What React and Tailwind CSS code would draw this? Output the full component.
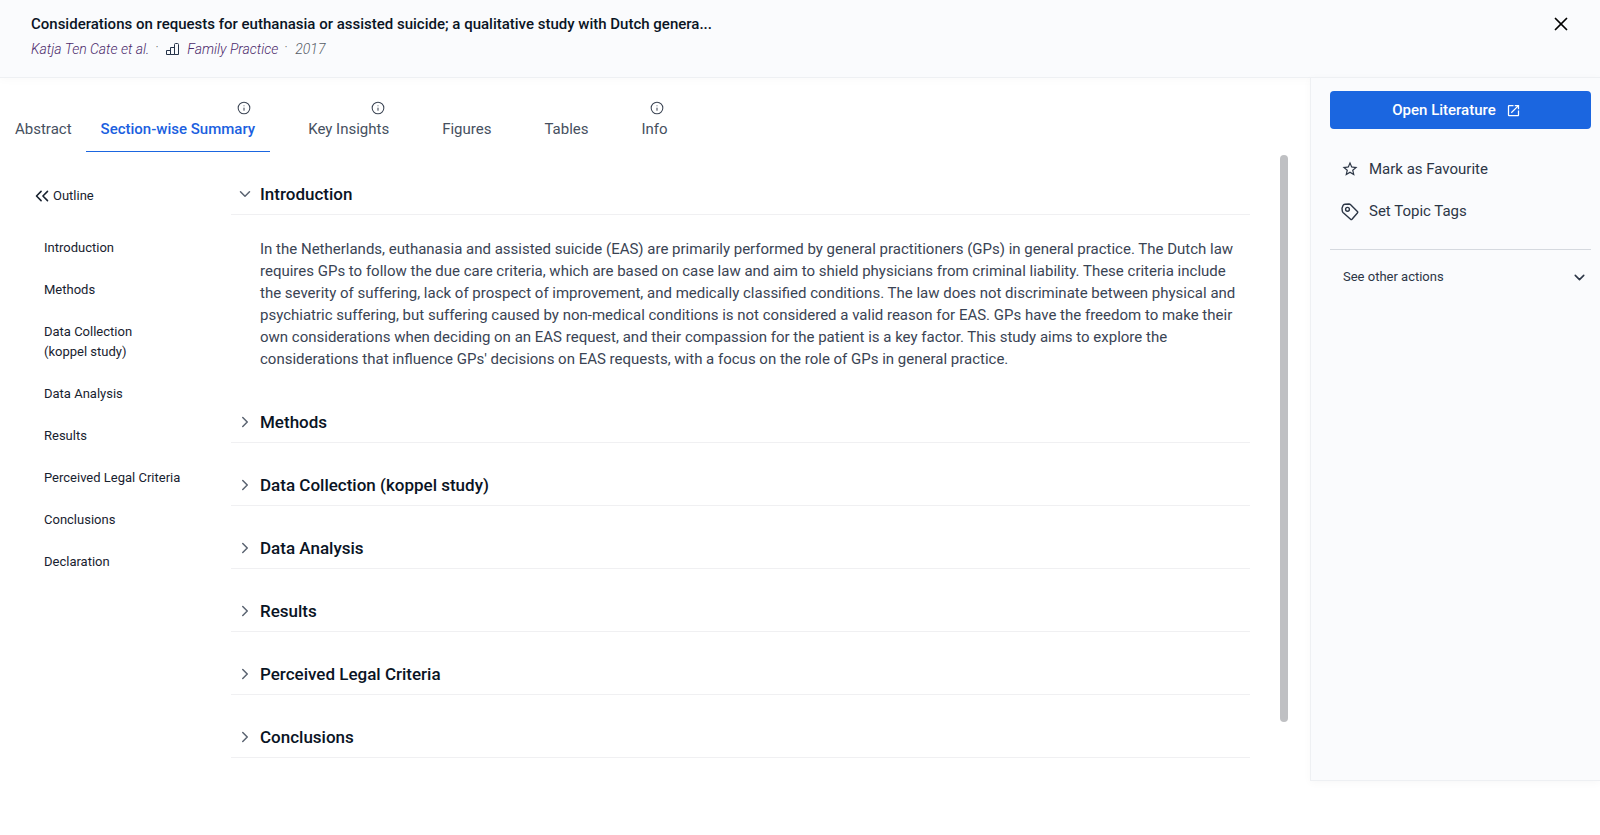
import { useState } from "react";
import { ChevronDown, ChevronRight, ChevronsLeft, Info, X } from "lucide-react";
import { MdOpenInNew, MdStarBorder } from "react-icons/md";

const tabs = [
  { id: "abstract", label: "Abstract" },
  { id: "summary", label: "Section-wise Summary", info: true },
  { id: "insights", label: "Key Insights", info: true },
  { id: "figures", label: "Figures" },
  { id: "tables", label: "Tables" },
  { id: "info", label: "Info", info: true },
];

const outline = [
  "Introduction",
  "Methods",
  "Data Collection (koppel\u00a0study)",
  "Data Analysis",
  "Results",
  "Perceived Legal Criteria",
  "Conclusions",
  "Declaration",
];

const sections = outline.slice(0, 7);

const introduction =
  "In the Netherlands, euthanasia and assisted suicide (EAS) are primarily performed by general practitioners (GPs) in general practice. The Dutch law requires GPs to follow the due care criteria, which are based on case law and aim to shield physicians from criminal liability. These criteria include the severity of suffering, lack of prospect of improvement, and medically classified conditions. The law does not discriminate between physical and psychiatric suffering, but suffering caused by non-medical conditions is not considered a valid reason for EAS. GPs have the freedom to make their own considerations when deciding on an EAS request, and their compassion for the patient is a key factor. This study aims to explore the considerations that influence GPs' decisions on EAS requests, with a focus on the role of GPs in general practice.";

const JournalIcon = () => (
  <svg className="h-3 w-[13px]" viewBox="0 0 13 12" fill="none" stroke="#26344a" strokeWidth="1">
    <path d="M.5 7.5h4v4h-4zM4.5 4.5h4v7h-4zM8.5 1.5q0-1 1-1h2q1 0 1 1v10h-4z" />
  </svg>
);

const TagIcon = () => (
  <svg
    className="h-[18px] w-[18px]"
    viewBox="0 0 18 18"
    fill="none"
    stroke="currentColor"
    strokeWidth="1.4"
    strokeLinejoin="round"
  >
    <path d="M1 5.2 2 2.6Q2.500 1.300 4 1.200L8 1Q8.800 1 9.400 1.600L16.400 8.600Q17.100 9.300 16.400 10L11 16.300Q10.300 17 9.600 16.300L2 9.400Q1.400 8.800 1.300 8Z" />
    <circle cx="6.500" cy="6.300" r="1.900" />
  </svg>
);

const Header = () => (
  <header className="relative flex h-[78px] items-start justify-between border-b border-[#eef0f3] bg-[#fafbfd] pl-[31px] pr-7 pt-[13px] shadow-[0_3px_8px_rgba(0,0,0,0.02)]">
    <div>
      <h1 className="text-[15px] font-medium leading-[22px] text-[#0a1424]">
        Considerations on requests for euthanasia or assisted suicide; a qualitative study with Dutch genera...
      </h1>
      <div className="mt-0.5 flex items-center text-[14px] font-light italic leading-5">
        <a href="#author" className="text-[#4b2a6b]">
          Katja Ten Cate et al.
        </a>
        <span className="w-[17px] pb-1 pl-[6px] text-[#555]">·</span>
        <JournalIcon />
        <a href="#journal" className="ml-2 text-[#4b2a6b]">
          Family Practice
        </a>
        <span className="w-[17px] pb-1 pl-[6px] text-[#555]">·</span>
        <span className="text-[#555b66]">2017</span>
      </div>
    </div>
    <button type="button" aria-label="Close" className="text-black">
      <X size={22} strokeWidth={1.9} />
    </button>
  </header>
);

const Tabs = ({ active, onChange }) => (
  <nav className="flex gap-[23px] pt-[22px]">
    {tabs.map((tab) => (
      <button
        key={tab.id}
        type="button"
        onClick={() => onChange(tab.id)}
        className={`flex h-[52px] flex-col items-end border-b px-[15px] text-[15px] leading-5 first:-mr-6 ${
          tab.id === active
            ? "border-[#1b66e0] font-medium text-[#1b5fe0]"
            : "border-transparent text-[#465060]"
        }`}
      >
        <span className="mb-1 mr-1 flex h-[15px] items-center">
          {tab.info && <Info size={14} strokeWidth={1.8} className="text-[#3d4655]" />}
        </span>
        {tab.label}
      </button>
    ))}
  </nav>
);

const Outline = () => (
  <aside className="w-[231px] shrink-0 pl-[31px] pt-[34px] text-[#18222f]">
    <button type="button" className="flex h-5 items-center text-[13px] leading-5">
      <ChevronsLeft size={22} strokeWidth={1.7} />
      Outline
    </button>
    <ul className="mt-8 flex w-[160px] flex-col gap-[22px] pl-[13px] text-[13px] leading-5">
      {outline.map((item) => (
        <li key={item}>
          <a href="#section" className="block">
            {item}
          </a>
        </li>
      ))}
    </ul>
  </aside>
);

const Section = ({ title, open, onToggle }) => (
  <section>
    <h2 className="border-b border-[#f0f0f2] pb-[9px]">
      <button
        type="button"
        onClick={onToggle}
        className="flex items-center gap-[6px] pl-[5px] text-[17px] font-medium leading-[22px] text-[#0a1424]"
      >
        {open ? (
          <ChevronDown size={18} strokeWidth={2} className="text-[#5a6371]" />
        ) : (
          <ChevronRight size={18} strokeWidth={2} className="text-[#5a6371]" />
        )}
        {title}
      </button>
    </h2>
    {open && (
      <p className="pb-[10px] pl-[29px] pr-3 pt-[23px] text-[15px] leading-[22px] text-[#3a4454]">{introduction}</p>
    )}
  </section>
);

const Actions = () => (
  <aside className="relative -mt-px flex h-[704px] w-[290px] shrink-0 flex-col border border-r-0 border-[#eef0f3] bg-[#fafbfd] pl-[19px] pr-[9px] pt-[13px] text-[#2c3646] shadow-[0_2px_8px_rgba(0,0,0,0.03)]">
    <button
      type="button"
      className="flex h-[38px] items-center justify-center gap-[10px] rounded bg-[#1b66e0] pr-2 text-[15px] font-medium text-white"
    >
      Open Literature
      <MdOpenInNew size={15} />
    </button>
    <div className="flex flex-col gap-[22px] border-b border-[#d5d9df] pb-7 pl-[11px] pt-[30px] text-[15px] leading-5">
      <button type="button" className="flex items-center gap-[10px]">
        <MdStarBorder size={18} />
        Mark as Favourite
      </button>
      <button type="button" className="flex items-end gap-[10px]">
        <TagIcon />
        Set Topic Tags
      </button>
    </div>
    <button type="button" className="flex items-center justify-between pl-[13px] pr-[3px] pt-[17px] text-[13px] leading-5">
      See other actions
      <ChevronDown size={17} strokeWidth={2.2} />
    </button>
  </aside>
);

const App = () => {
  const [activeTab, setActiveTab] = useState("summary");
  const [openSection, setOpenSection] = useState("Introduction");

  return (
    <div className="min-h-screen bg-white font-[Roboto,sans-serif]">
      <Header />
      <div className="flex items-start">
        <main className="min-w-0 flex-1">
          <Tabs active={activeTab} onChange={setActiveTab} />
          <div className="flex items-start pr-[22px]">
            <Outline />
            <div className="flex min-w-0 flex-1 flex-col gap-[31px] pt-[31px]">
              {sections.map((title) => (
                <Section
                  key={title}
                  title={title}
                  open={title === openSection}
                  onToggle={() => setOpenSection(title === openSection ? null : title)}
                />
              ))}
            </div>
            {/* Scroll thumb */}
            <div className="ml-[30px] mt-[3px] h-[567px] w-2 rounded-full bg-[#bfc0c3]" />
          </div>
        </main>
        <Actions />
      </div>
    </div>
  );
};

export default App;
